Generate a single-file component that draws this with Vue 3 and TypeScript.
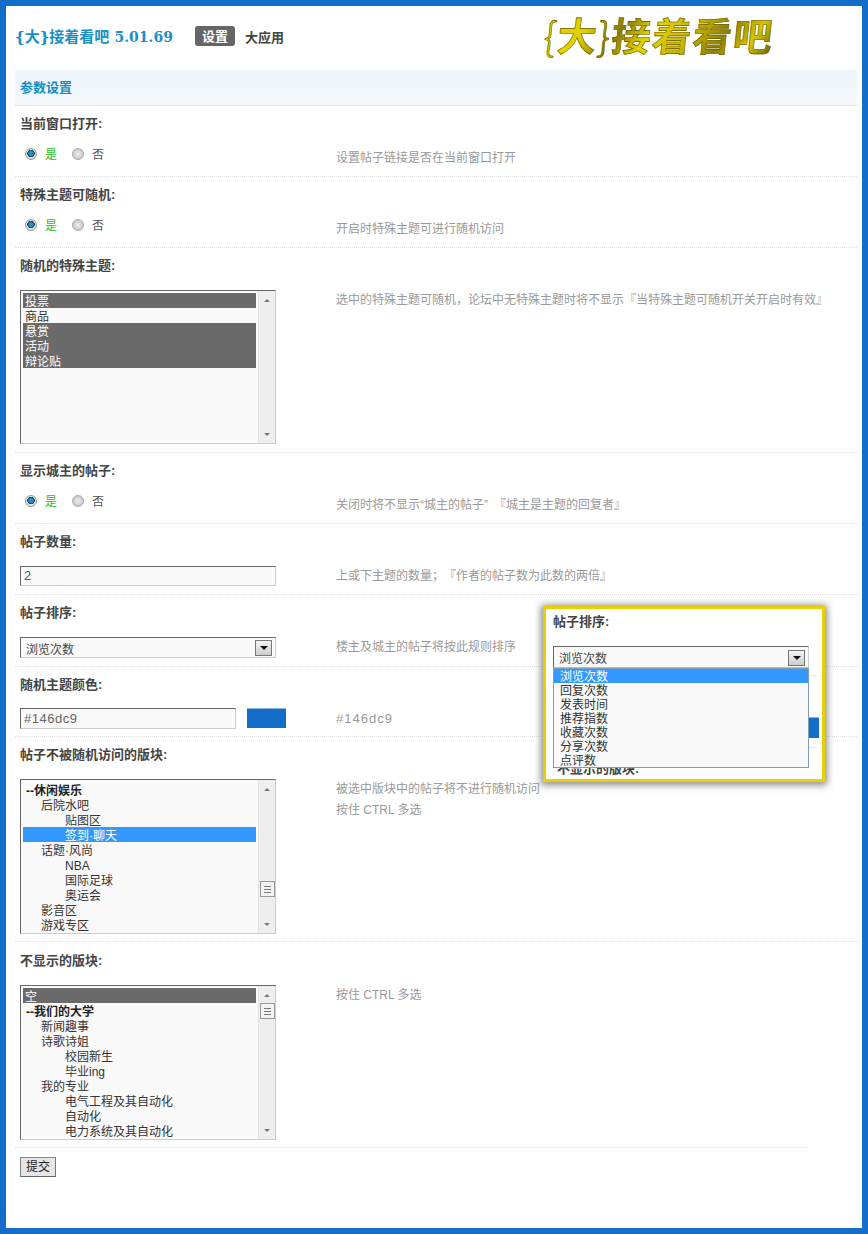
<script setup lang="ts">
interface Opt { text: string; level?: number; sel?: 'gray' | 'blue'; bold?: boolean }

const specials: Opt[] = [
  { text: '投票', sel: 'gray' },
  { text: '商品' },
  { text: '悬赏', sel: 'gray' },
  { text: '活动', sel: 'gray' },
  { text: '辩论贴', sel: 'gray' }
]
const forums: Opt[] = [
  { text: '--休闲娱乐', bold: true },
  { text: '后院水吧', level: 1 },
  { text: '贴图区', level: 2 },
  { text: '签到·聊天', level: 2, sel: 'blue' },
  { text: '话题·风尚', level: 1 },
  { text: 'NBA', level: 2 },
  { text: '国际足球', level: 2 },
  { text: '奥运会', level: 2 },
  { text: '影音区', level: 1 },
  { text: '游戏专区', level: 1 }
]
const hidden: Opt[] = [
  { text: '空', sel: 'gray' },
  { text: '--我们的大学', bold: true },
  { text: '新闻趣事', level: 1 },
  { text: '诗歌诗姐', level: 1 },
  { text: '校园新生', level: 2 },
  { text: '毕业ing', level: 2 },
  { text: '我的专业', level: 1 },
  { text: '电气工程及其自动化', level: 2 },
  { text: '自动化', level: 2 },
  { text: '电力系统及其自动化', level: 2 }
]
const sortOpts = ['浏览次数', '回复次数', '发表时间', '推荐指数', '收藏次数', '分享次数', '点评数']

interface Row {
  label: string
  kind: 'radio' | 'list' | 'input' | 'select' | 'color'
  hints: string[]
  tight?: boolean
  short?: boolean
  options?: Opt[]
  thumb?: number
  value?: string
}
const rows: Row[] = [
  { label: '当前窗口打开:', kind: 'radio', hints: ['设置帖子链接是否在当前窗口打开'] },
  { label: '特殊主题可随机:', kind: 'radio', hints: ['开启时特殊主题可进行随机访问'] },
  { label: '随机的特殊主题:', kind: 'list', short: true, options: specials, hints: ['选中的特殊主题可随机\uFF0C论坛中无特殊主题时将不显示『当特殊主题可随机开关开启时有效』'] },
  { label: '显示城主的帖子:', kind: 'radio', hints: ['关闭时将不显示“城主的帖子”\u2002『城主是主题的回复者』'] },
  { label: '帖子数量:', kind: 'input', value: '2', hints: ['上或下主题的数量\uFF1B『作者的帖子数为此数的两倍』'] },
  { label: '帖子排序:', kind: 'select', hints: ['楼主及城主的帖子将按此规则排序'] },
  { label: '随机主题颜色:', kind: 'color', tight: true, hints: ['#146dc9'] },
  { label: '帖子不被随机访问的版块:', kind: 'list', tight: true, options: forums, thumb: 90, hints: ['被选中版块中的帖子将不进行随机访问', '按住 CTRL 多选'] },
  { label: '不显示的版块:', kind: 'list', tight: true, options: hidden, thumb: 6, hints: ['按住 CTRL 多选'] }
]
</script>

<template>
  <div class="frame">
    <header class="head">
      <h1 class="title"><span class="brace">{</span>大<span class="brace">}</span>接着看吧 <span class="ver">5.01.69</span></h1>
      <nav class="tabs">
        <span class="tab on">设置</span>
        <span class="tab">大应用</span>
      </nav>
      <div class="logo"><span class="thin">{</span>大<span class="thin">}</span>接着看吧</div>
    </header>

    <div class="band">参数设置</div>

    <section v-for="row in rows" :key="row.label" class="row" :class="{ tight: row.tight }">
      <div class="label">{{ row.label }}</div>
      <div class="body">
        <div class="ctl">
          <div v-if="row.kind === 'radio'" class="radios">
            <span class="radio on"></span><span class="yes">是</span>
            <span class="radio"></span><span class="no">否</span>
          </div>

          <div v-else-if="row.kind === 'list'" class="listbox" :class="{ short: row.short }">
            <div class="opts">
              <div
                v-for="o in row.options"
                :key="o.text"
                class="opt"
                :class="[o.sel, 'lv' + (o.level ?? 0), { bold: o.bold }]"
              >{{ o.text }}</div>
            </div>
            <div class="sb">
              <span class="arr up"></span>
              <span v-if="row.thumb !== undefined" class="thumb" :style="{ marginTop: row.thumb + 'px' }"><i></i><i></i><i></i></span>
              <span class="arr down"></span>
            </div>
          </div>

          <div v-else-if="row.kind === 'input'" class="field wide">{{ row.value }}</div>

          <div v-else-if="row.kind === 'select'" class="select">
            <span>浏览次数</span>
            <span class="btn"></span>
          </div>

          <div v-else class="colorwrap">
            <div class="field color">#146dc9</div>
            <span class="swatch"></span>
          </div>
        </div>
        <div class="hints" :class="{ multi: row.hints.length > 1, code: row.kind === 'color' }">
          <p v-for="h in row.hints" :key="h">{{ h }}</p>
        </div>
      </div>
    </section>

    <div class="submit"><button type="button" class="sub">提交</button></div>

    <aside class="pop">
      <div class="behind sw"></div>
      <div class="behind l1"></div>
      <div class="behind l2"></div>
      <div class="behind under">不显示的版块:</div>
      <div class="label pl">帖子排序:</div>
      <div class="select ps">
        <span>浏览次数</span>
        <span class="btn"></span>
      </div>
      <div class="drop">
        <div v-for="(s, i) in sortOpts" :key="s" class="dopt" :class="{ hi: i === 0 }">{{ s }}</div>
      </div>
    </aside>
  </div>
</template>

<style>
html, body { margin: 0; background: #fff; }
</style>

<style scoped>
.frame {
  position: relative;
  box-sizing: border-box;
  width: 868px;
  height: 1234px;
  overflow: hidden;
  border: 6px solid #146dc9;
  padding: 0 5px 0 9px;
  background: #fff;
  font: 12px/15px "Liberation Sans", "Noto Sans CJK SC", sans-serif;
  color: #333;
}
.head {
  height: 64px;
  display: flex;
  align-items: flex-start;
}
.title {
  margin: 21px 0 0;
  width: 180px;
  font-size: 15px;
  line-height: 20px;
  font-weight: 700;
  color: #1b8fc4;
  white-space: nowrap;
}
.brace { font-family: "DejaVu Serif", serif; font-weight: 700; }
.ver { font-family: "DejaVu Serif", serif; font-size: 14px; margin-left: 1px; }
.tabs { display: flex; gap: 10px; margin-top: 20px; font-size: 13px; font-weight: 700; color: #444; line-height: 23px; height: 20px; }
.tab.on { width: 40px; height: 20px; text-align: center; color: #fff; background: #666; border-radius: 3px; line-height: 21px; }
.logo {
  margin: 4px 0 0 260px;
  font: 700 39px/48px "Noto Sans CJK SC", sans-serif;
  letter-spacing: 1.5px;
  white-space: nowrap;
  transform: skewX(-6deg);
  color: transparent;
  background: linear-gradient(120deg, #e2cf00 0 20%, #8a7b00 34%, #e6d200 46%, #c9b600 62%, #8f8000 76%, #d8c500 88%, #5f5500);
  -webkit-background-clip: text;
  background-clip: text;
  -webkit-text-stroke: .6px #6b5f00;
}
.thin { font-weight: 300; }
.band {
  height: 35px;
  line-height: 35px;
  padding-left: 5px;
  font-size: 13px;
  font-weight: 700;
  color: #0f8fc0;
  background: linear-gradient(#edf4fb, #f4f8fd);
  border-bottom: 1px dotted #d5d5d5;
}
.row { padding: 0 0 8px 5px; border-bottom: 1px dotted #ddd; }
.row.tight { padding-bottom: 7px; }
.label {
  box-sizing: border-box;
  height: 42px;
  padding-top: 9px;
  line-height: 18px;
  font-size: 13px;
  font-weight: 700;
  color: #444;
}
.row:last-of-type { margin-right: 50px; }
.row:last-of-type .label { height: 43px; padding-top: 10px; }
.body { display: flex; align-items: flex-start; }
.ctl { width: 316px; flex: none; }
.hints { color: #999; line-height: 20px; text-spacing-trim: space-all; }
.hints.multi { line-height: 21px; }
.hints.code { font-size: 13px; letter-spacing: 1px; }
.hints p { margin: 0; white-space: nowrap; }

.radios { height: 20px; display: flex; align-items: flex-start; padding-left: 5px; line-height: 15px; }
.radio {
  box-sizing: border-box;
  width: 12px;
  height: 12px;
  border-radius: 50%;
  border: 1px solid #aaa;
  background: radial-gradient(circle, #eee, #bbb);
}
.radio.on { background: radial-gradient(circle at 50% 45%, #2a8fc0 0 2px, #0c3d5c 3.5px, #e4e4e4 4px, #ccc); border-color: #999; }
.yes { color: #1fbf1f; margin: 0 15px 0 8px; }
.no { color: #555; margin-left: 8px; }

.listbox {
  box-sizing: border-box;
  width: 256px;
  height: 155px;
  display: flex;
  justify-content: space-between;
  border: 1px solid;
  border-color: #666 #ccc #ccc #666;
  background: #f9f9f9;
  padding: 2px 0 0 2px;
}
.listbox.short { height: 154px; }
.opts { width: 233px; height: 150px; overflow: hidden; }
.opt { height: 15px; line-height: 19px; white-space: nowrap; padding-left: 2px; }
.opt.lv1 { padding-left: 18px; }
.opt.lv2 { padding-left: 42px; }
.opt.bold { font-weight: 700; padding-left: 3px; color: #222; }
.opt.gray { background: #6a6a6a; color: #fff; }
.opt.blue { background: #3399ff; color: #fff; }
.sb {
  width: 16px;
  margin: -2px 0 0;
  background: #eee;
  border-left: 1px solid #e2e2e2;
  display: flex;
  flex-direction: column;
  align-items: center;
}
.arr { width: 0; height: 0; border-left: 3px solid transparent; border-right: 3px solid transparent; }
.arr.up { border-bottom: 3px solid #777; margin-top: 8px; }
.arr.down { border-top: 3px solid #777; margin-top: auto; margin-bottom: 7px; }
.thumb {
  box-sizing: border-box;
  width: 15px;
  height: 16px;
  background: #f2f2f2;
  border: 1px solid #999;
  display: flex;
  flex-direction: column;
  justify-content: center;
  gap: 2px;
  padding: 0 3px;
}
.thumb i { display: block; height: 1px; background: #777; }

.field {
  box-sizing: border-box;
  height: 20px;
  border: 1px solid;
  border-color: #666 #ccc #ccc #666;
  background: #f9f9f9;
  padding-left: 3px;
  line-height: 18px;
  color: #555;
}
.field.wide { width: 256px; font-size: 13px; }
.select {
  box-sizing: border-box;
  width: 256px;
  height: 21px;
  padding: 4px 3px 0 5px;
  display: flex;
  justify-content: space-between;
  border: 1px solid;
  border-color: #666 #ccc #ccc #666;
  background: #f9f9f9;
  line-height: 17px;
  color: #444;
}
.btn {
  box-sizing: border-box;
  width: 17px;
  height: 16px;
  margin-top: -2px;
  border: 1px solid #777;
  background: linear-gradient(#f4f4f4, #ccc);
  position: relative;
}
.btn::after {
  content: "";
  position: absolute;
  left: 4px;
  top: 5px;
  border-left: 4px solid transparent;
  border-right: 4px solid transparent;
  border-top: 4px solid #111;
}
.colorwrap { display: flex; gap: 11px; margin-top: -1px; }
.field.color { width: 216px; height: 21px; font-size: 13px; letter-spacing: .5px; line-height: 19px; color: #666; }
.swatch { width: 39px; height: 20px; background: #146dc9; box-shadow: inset 0 1px 0 #8db4dd; }

.submit { padding: 9px 0 0 5px; }
.sub {
  display: block;
  width: 36px;
  height: 20px;
  padding: 0;
  border: 1px solid;
  border-color: #888 #777 #666 #888;
  background: #e6e6e6;
  font: 12px/18px "Liberation Sans", "Noto Sans CJK SC", sans-serif;
  color: #222;
}

.pop {
  position: absolute;
  left: 537px;
  top: 600px;
  box-sizing: border-box;
  width: 282px;
  height: 176px;
  border: 3px solid #e8cf00;
  background: #fff;
  box-shadow: 0 1px 7px 2px rgba(40, 40, 40, .55);
  overflow: hidden;
}
.label.pl { position: absolute; left: 7px; top: 0; padding-top: 4px; }
.select.ps { position: absolute; left: 7px; top: 37px; height: 22px; padding-top: 4px; border-bottom-color: #bbb; }
.select.ps .btn { margin-top: -1px; }
.drop {
  position: absolute;
  left: 7px;
  top: 59px;
  box-sizing: border-box;
  width: 256px;
  height: 100px;
  border: 1px solid #7f9db9;
  background: #f9f9f9;
  overflow: hidden;
}
.dopt { height: 14px; line-height: 17px; padding-left: 6px; color: #333; white-space: nowrap; }
.dopt.hi { background: #3399ff; color: #fff; }
.behind { position: absolute; }
.sw { left: 262px; top: 108px; width: 11px; height: 20px; background: #146dc9; border-top: 1px solid #8db4dd; }
.l1 { left: 262px; top: 66px; width: 12px; border-top: 1px dotted #ddd; }
.l2 { left: 262px; top: 138px; width: 12px; border-top: 1px dotted #ddd; }
.under { left: 11px; top: 151px; font-size: 13px; font-weight: 700; line-height: 18px; color: #444; }
</style>
